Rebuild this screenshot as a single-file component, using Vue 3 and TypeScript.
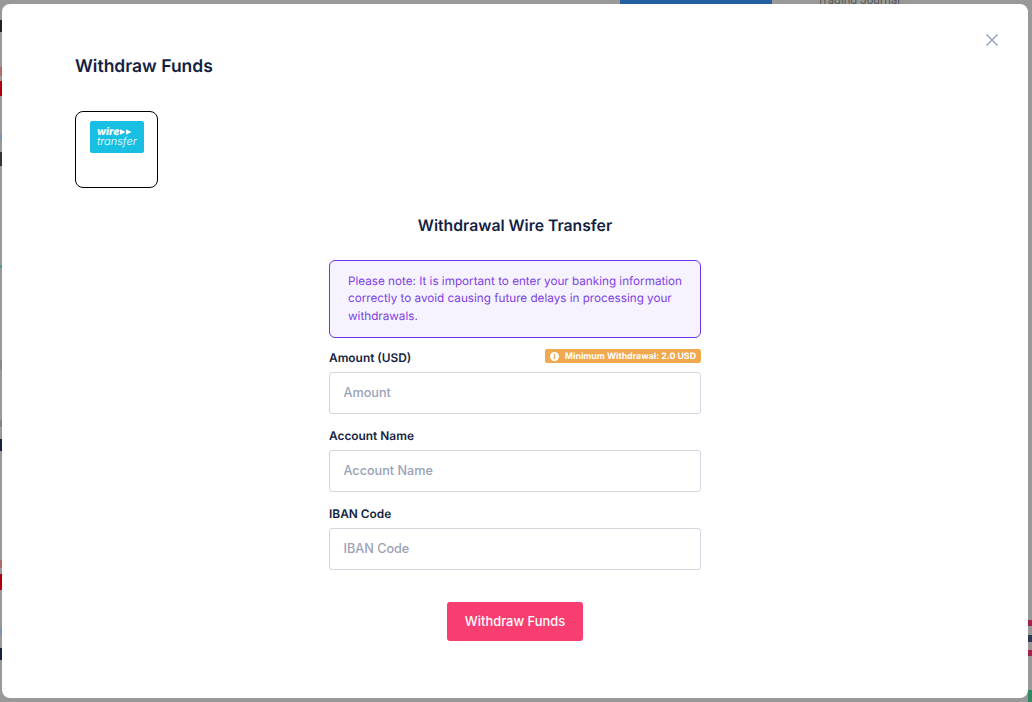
<script setup lang="ts">
interface Field {
  label: string
  placeholder: string
  hint?: string
}

const fields: Field[] = [
  { label: 'Amount (USD)', placeholder: 'Amount', hint: 'Minimum Withdrawal: 2.0 USD' },
  { label: 'Account Name', placeholder: 'Account Name' },
  { label: 'IBAN Code', placeholder: 'IBAN Code' },
]

// bits of the page behind the overlay that show at the window edges
const edgeBits = [
  { left: 0, top: 20, width: 2, height: 12, background: '#222' },
  { left: 0, top: 67, width: 2, height: 9, background: '#b06a6a' },
  { left: 0, top: 81, width: 2, height: 15, background: '#b00010' },
  { left: 0, top: 134, width: 2, height: 6, background: '#7f93ad' },
  { left: 0, top: 152, width: 2, height: 14, background: '#333' },
  { left: 0, top: 265, width: 2, height: 3, background: '#4f9a8f' },
  { left: 0, top: 360, width: 2, height: 10, background: '#8a8a8a' },
  { left: 0, top: 420, width: 2, height: 7, background: '#85808f' },
  { left: 0, top: 439, width: 2, height: 12, background: '#14213f' },
  { left: 0, top: 560, width: 2, height: 8, background: '#b06a6a' },
  { left: 0, top: 574, width: 2, height: 16, background: '#b00010' },
  { left: 0, top: 628, width: 2, height: 7, background: '#7f93ad' },
  { left: 0, top: 648, width: 2, height: 12, background: '#14213f' },
  { left: 1028, top: 620, width: 4, height: 6, background: '#a3244a' },
  { left: 1028, top: 635, width: 4, height: 7, background: '#2c3b55' },
  { left: 1028, top: 650, width: 4, height: 6, background: '#a3244a' },
  { left: 1028, top: 690, width: 4, height: 12, background: '#2f8a63' },
  { left: 620, top: 0, width: 152, height: 4, background: '#245f9e' },
]
</script>

<template>
  <div class="backdrop">
    <span
      v-for="(bit, i) in edgeBits"
      :key="i"
      class="edge-bit"
      :style="{
        left: bit.left + 'px',
        top: bit.top + 'px',
        width: bit.width + 'px',
        height: bit.height + 'px',
        background: bit.background,
      }"
    ></span>
    <span class="behind-text">Trading Journal</span>

    <div class="modal">
      <button type="button" class="close-btn" aria-label="Close">
        <svg width="14" height="14" viewBox="0 0 14 14" fill="none">
          <path d="M1.5 1.5l11 11M12.5 1.5l-11 11" stroke="#97a2bd" stroke-width="1.5" />
        </svg>
      </button>

      <h1 class="title">Withdraw Funds</h1>

      <div class="method-card">
        <div class="wire-logo">
          <div class="wire-top">
            <span>wire</span>
            <svg width="12" height="6" viewBox="0 0 13 6">
              <path d="M0 0l6 3-6 3zM6.5 0l6 3-6 3z" fill="#fff" />
            </svg>
          </div>
          <div class="wire-bottom">transfer</div>
        </div>
      </div>

      <div class="form">
        <h2 class="form-title">Withdrawal Wire Transfer</h2>

        <div class="note">
          Please note: It is important to enter your banking information correctly to avoid causing
          future delays in processing your withdrawals.
        </div>

        <div v-for="field in fields" :key="field.label" class="field">
          <div class="label-row">
            <label class="label">{{ field.label }}</label>
            <span v-if="field.hint" class="hint">
              <svg width="9" height="9" viewBox="0 0 10 10">
                <circle cx="5" cy="5" r="5" fill="#fff" />
                <rect x="4.2" y="4.2" width="1.6" height="3.8" fill="#f0a94e" />
                <rect x="4.2" y="2" width="1.6" height="1.6" fill="#f0a94e" />
              </svg>
              {{ field.hint }}
            </span>
          </div>
          <input class="input" type="text" :placeholder="field.placeholder" />
        </div>

        <button type="button" class="submit">Withdraw Funds</button>
      </div>
    </div>
  </div>
</template>

<style scoped>
.backdrop {
  position: relative;
  box-sizing: border-box;
  width: 1032px;
  height: 702px;
  padding: 4px 4px 4px 2px;
  background: #999999;
  overflow: hidden;
  font-family: Inter, 'Liberation Sans', sans-serif;
  text-rendering: geometricPrecision;
}

.edge-bit {
  position: absolute;
}

.behind-text {
  position: absolute;
  left: 817px;
  top: -8px;
  font-size: 11.2px;
  line-height: 16px;
  color: #555;
}

.modal {
  position: relative;
  box-sizing: border-box;
  height: 694px;
  padding: 52px 73px 0;
  background: #fff;
  border-radius: 8px;
}

.close-btn {
  position: absolute;
  top: 29px;
  right: 29px;
  width: 14px;
  height: 14px;
  padding: 0;
  border: 0;
  background: none;
  display: flex;
}

.title {
  margin: 0;
  font-size: 17.5px;
  line-height: 21px;
  font-weight: 600;
  color: #141f43;
}

.method-card {
  box-sizing: border-box;
  width: 83px;
  height: 77px;
  margin-top: 34px;
  padding: 9px 0 0 14px;
  border: 1px solid #000;
  border-radius: 8px;
}

.wire-logo {
  box-sizing: border-box;
  width: 54px;
  height: 32px;
  padding: 6px 0 0 7px;
  background: #17bfe3;
  border-radius: 2px;
  color: #fff;
}

.wire-top {
  display: flex;
  align-items: center;
  gap: 1px;
  font-size: 10.5px;
  line-height: 9px;
  font-weight: 800;
  font-style: italic;
}

.wire-bottom {
  font-size: 11px;
  line-height: 10px;
  font-weight: 300;
  font-style: italic;
}

.form {
  width: 372px;
  margin: 28px auto 0;
  display: flex;
  flex-direction: column;
  align-items: stretch;
}

.form-title {
  margin: 0 0 24px;
  text-align: center;
  font-size: 15.75px;
  line-height: 20px;
  font-weight: 600;
  color: #141f43;
}

.note {
  box-sizing: border-box;
  height: 78px;
  padding: 12px 16px 0 18px;
  font-size: 11.7px;
  line-height: 17.3px;
  color: #7b3fe4;
  background: #f7f3fe;
  border: 1px solid #6f35e8;
  border-radius: 6px;
}

.field {
  margin-top: 11px;
}

.field + .field {
  margin-top: 13px;
}

.label-row {
  display: flex;
  justify-content: space-between;
  align-items: flex-start;
  height: 23px;
}

.label {
  font-size: 11.9px;
  line-height: 17px;
  font-weight: 600;
  color: #141f43;
}

.hint {
  display: flex;
  align-items: center;
  gap: 6px;
  height: 14px;
  padding: 0 5px;
  font-size: 8.8px;
  font-weight: 700;
  color: #fff;
  background: #f0a94e;
  border-radius: 2px;
}

.input {
  display: block;
  box-sizing: border-box;
  width: 100%;
  height: 42px;
  padding: 0 13.5px 2px;
  font-family: inherit;
  font-size: 12.65px;
  font-weight: 500;
  border: 1px solid #d3d7e0;
  border-radius: 3px;
  background: #fff;
  outline: none;
}

.input::placeholder {
  color: #9aa2b8;
}

.submit {
  align-self: center;
  width: 136px;
  height: 39px;
  margin-top: 32px;
  padding: 0 0 1px;
  font-family: inherit;
  font-size: 12.9px;
  font-weight: 500;
  color: #fff;
  background: #f83e70;
  border: 0;
  border-radius: 3px;
}
</style>

<style>
body {
  margin: 0;
}
</style>
